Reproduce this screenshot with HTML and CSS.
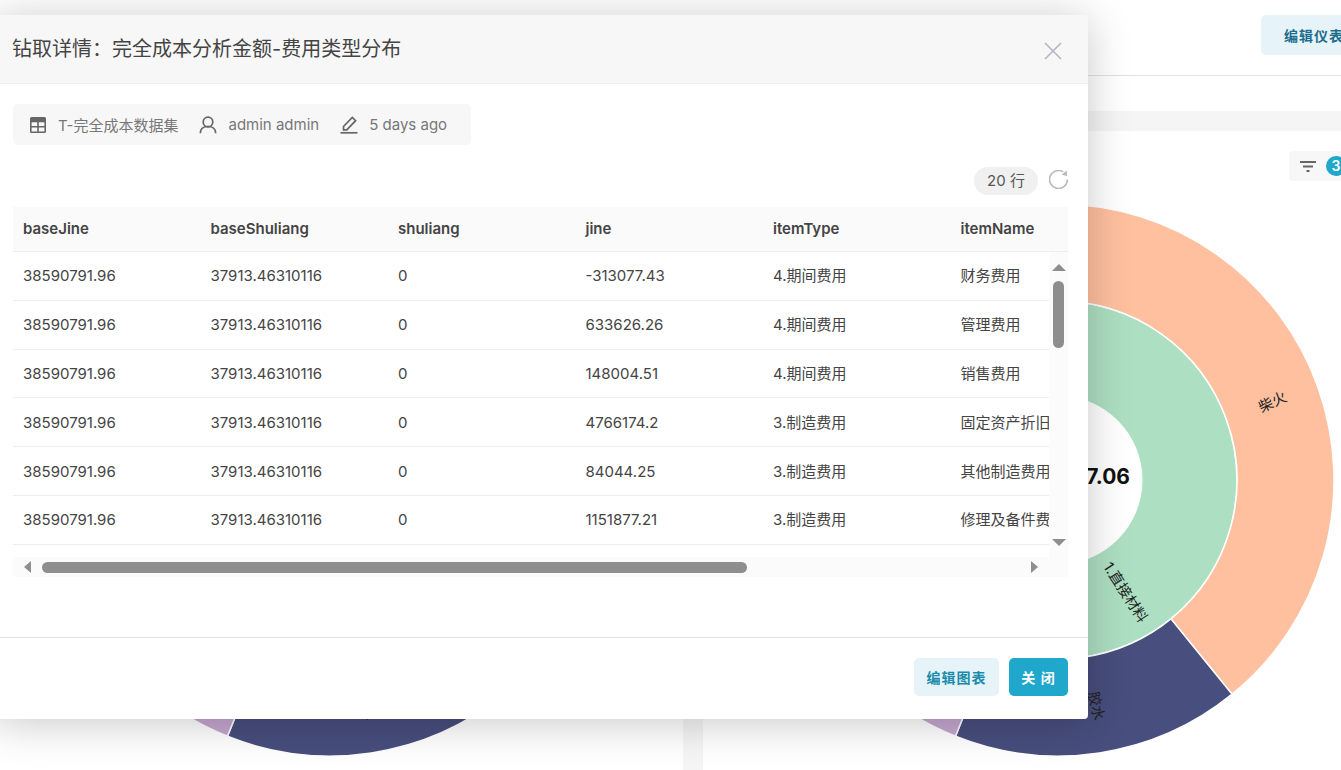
FILE: index.html
```html
<!DOCTYPE html>
<html lang="zh">
<head>
  <meta charset="UTF-8">
  <meta name="viewport" content="width=device-width, initial-scale=1">
  <title>钻取详情</title>
  <link rel="stylesheet" href="styles.css">
</head>
<body>
  <!-- Dashboard behind the modal -->
  <div class="page">
    <div class="topbar">
      <button class="btn btn-light btn-edit-dash">编辑仪表盘</button>
    </div>
    <div class="tabbar"></div>
    <div class="panels">
      <div class="panel">
        <div class="panel-head">
          <div class="filter-chip">
            <svg class="filter-icon" viewBox="0 0 16 12"><path d="M0 1h16M3 5.500h10M6.500 10h3" /></svg>
            <span class="filter-badge">3</span>
          </div>
        </div>
        <svg class="donut" viewBox="-280 -280 560 560">
          <circle class="ring-inner" r="179" />
          <circle class="ring-hole" r="84" />
          <path class="seg seg-peach" d="M0 -276A276 276 0 0 1 174.100 214.200L112.900 138.900A179 179 0 0 0 0 -179Z" />
          <path class="seg seg-navy" d="M174.100 214.200A276 276 0 0 1 -102.500 256.300L-66.500 166.200A179 179 0 0 0 112.900 138.900Z" />
          <path class="seg seg-purple" d="M-102.500 256.300A276 276 0 0 1 -239 138L-155 89.500A179 179 0 0 0 -66.500 166.200Z" />
          <text class="donut-label" transform="translate(37 226) rotate(78)">胶水</text>
        </svg>
      </div>
      <div class="panel">
        <div class="panel-head">
          <div class="filter-chip">
            <svg class="filter-icon" viewBox="0 0 16 12"><path d="M0 1h16M3 5.500h10M6.500 10h3" /></svg>
            <span class="filter-badge">3</span>
          </div>
        </div>
        <svg class="donut" viewBox="-280 -280 560 560">
          <circle class="ring-inner" r="179" />
          <circle class="ring-hole" r="84" />
          <path class="seg seg-peach" d="M0 -276A276 276 0 0 1 174.100 214.200L112.900 138.900A179 179 0 0 0 0 -179Z" />
          <path class="seg seg-navy" d="M174.100 214.200A276 276 0 0 1 -102.500 256.300L-66.500 166.200A179 179 0 0 0 112.900 138.900Z" />
          <path class="seg seg-purple" d="M-102.500 256.300A276 276 0 0 1 -239 138L-155 89.500A179 179 0 0 0 -66.500 166.200Z" />
          <text class="donut-label" transform="translate(215 -77) rotate(-25)">柴火</text>
          <text class="donut-label" transform="translate(66.500 113) rotate(57)">1.直接材料</text>
          <text class="donut-label" transform="translate(37 226) rotate(78)">胶水</text>
          <text class="donut-total" x="72" y="4">7.06</text>
        </svg>
      </div>
    </div>
  </div>

  <!-- Drill-down modal -->
  <div class="modal">
    <div class="modal-header">
      <h2 class="modal-title">钻取详情：完全成本分析金额-费用类型分布</h2>
      <svg class="modal-close" viewBox="0 0 18 18"><path d="M1 1l16 16M17 1L1 17" /></svg>
    </div>

    <div class="modal-body">
      <div class="info-bar">
        <svg class="info-icon" viewBox="0 0 18 18">
          <path class="icon-fill" fill-rule="evenodd" d="M2.500 1h13A1.500 1.500 0 0 1 17 2.500v13a1.500 1.500 0 0 1-1.500 1.500h-13A1.500 1.500 0 0 1 1 15.500v-13A1.500 1.500 0 0 1 2.500 1ZM2.600 6.200v3.800h5.600V6.200ZM9.800 6.200v3.800h5.600V6.200ZM2.600 11.500v3.900h5.600v-3.900ZM9.800 11.500v3.900h5.600v-3.900Z" />
        </svg>
        <span class="info-text info-text-cn">T-完全成本数据集</span>
        <svg class="info-icon" viewBox="0 0 18 18">
          <circle class="icon-line" cx="9" cy="6" r="4.800" />
          <path class="icon-line" d="M1.300 17.300c0-4.500 3.300-6.800 7.700-6.800s7.700 2.300 7.700 6.800" />
        </svg>
        <span class="info-text">admin admin</span>
        <svg class="info-icon" viewBox="0 0 18 18">
          <path class="icon-line" d="M3.500 13.800v-3.300L12.300 1.500l3.300 3.200-8.800 9.100Z" />
          <path class="icon-line" d="M0.500 16.800h17" />
        </svg>
        <span class="info-text">5 days ago</span>
      </div>

      <div class="table-tools">
        <span class="row-count">20 行</span>
        <svg class="refresh" viewBox="1 1 18 18">
          <path d="M18.500 10A8.500 8.500 0 1 1 14.500 2.800" />
          <polygon points="17.800,1.500 18.200,6.800 13,5.600" />
        </svg>
      </div>

      <div class="data-table">
        <table class="table-head">
          <tr>
            <th>baseJine</th><th>baseShuliang</th><th>shuliang</th><th>jine</th><th>itemType</th><th>itemName</th>
          </tr>
        </table>
        <div class="table-main">
          <div class="table-rows">
            <table class="table-body">
              <tr><td>38590791.96</td><td>37913.46310116</td><td>0</td><td>-313077.43</td><td>4.期间费用</td><td>财务费用</td></tr>
              <tr><td>38590791.96</td><td>37913.46310116</td><td>0</td><td>633626.26</td><td>4.期间费用</td><td>管理费用</td></tr>
              <tr><td>38590791.96</td><td>37913.46310116</td><td>0</td><td>148004.51</td><td>4.期间费用</td><td>销售费用</td></tr>
              <tr><td>38590791.96</td><td>37913.46310116</td><td>0</td><td>4766174.2</td><td>3.制造费用</td><td>固定资产折旧</td></tr>
              <tr><td>38590791.96</td><td>37913.46310116</td><td>0</td><td>84044.25</td><td>3.制造费用</td><td>其他制造费用</td></tr>
              <tr><td>38590791.96</td><td>37913.46310116</td><td>0</td><td>1151877.21</td><td>3.制造费用</td><td>修理及备件费</td></tr>
            </table>
          </div>
          <div class="vbar">
            <span class="arrow arrow-up"></span>
            <span class="vbar-thumb"></span>
            <span class="arrow arrow-down"></span>
          </div>
        </div>
        <div class="hbar">
          <span class="arrow arrow-left"></span>
          <span class="hbar-thumb"></span>
          <span class="arrow arrow-right"></span>
        </div>
      </div>
    </div>

    <div class="modal-footer">
      <button class="btn btn-light">编辑图表</button>
      <button class="btn btn-primary">关 闭</button>
    </div>
  </div>
</body>
</html>
```

FILE: styles.css
```css
* {
  box-sizing: border-box;
  margin: 0;
  padding: 0;
}

body {
  height: 770px;
  overflow: hidden;
  position: relative;
  background-color: #fff;
  color: #444;
  font-family: Inter, "Noto Sans CJK SC", sans-serif;
  font-size: 15px;
}

/* Dashboard behind */
.page {
  width: 1436px;
  margin-left: -23px;
  background-color: #f5f5f5;
  height: 770px;
}

.topbar {
  height: 76px;
  background-color: #fff;
  border-bottom: 1px solid #e2e2e2;
  display: flex;
  justify-content: flex-end;
  padding: 15px 31px 0 0;
}

.tabbar {
  height: 35px;
  background-color: #fff;
}

.panels {
  display: grid;
  grid-template-columns: 706px 710px;
  gap: 20px;
  margin-top: 20px;
}

.panel {
  background-color: #fff;
  height: 640px;
}

.panel-head {
  display: flex;
  justify-content: flex-end;
  padding: 20px 53px 0 0;
}

.filter-chip {
  width: 71px;
  height: 30px;
  background-color: #f7f7f7;
  border-radius: 4px;
  display: flex;
  align-items: center;
  padding-left: 11px;
  gap: 10px;
}

.filter-icon {
  width: 16px;
  height: 12px;
  margin-top: 2px;
  fill: none;
  stroke: #666;
  stroke-width: 2;
}

.filter-badge {
  width: 20px;
  height: 20px;
  border-radius: 50%;
  background-color: #20a7cc;
  color: #fff;
  font-size: 14px;
  font-weight: 600;
  text-align: center;
  line-height: 20px;
}

.donut {
  display: block;
  width: 560px;
  height: 560px;
  margin: 19px auto 0;
}

.ring-inner {
  fill: #addfc2;
  stroke: #fff;
  stroke-width: 1.500;
}

.ring-hole {
  fill: #fff;
  stroke: #fff;
}

.seg {
  stroke: #fff;
  stroke-width: 1.500;
}

.seg-peach { fill: #ffc09f; }
.seg-navy { fill: #484e7d; }
.seg-purple { fill: #c6a6d0; }

.donut-label {
  font-size: 14.500px;
  fill: #222;
  text-anchor: middle;
  dominant-baseline: middle;
}

.donut-total {
  font-size: 21px;
  font-weight: 700;
  fill: #111;
  text-anchor: end;
}

/* Buttons */
.btn {
  height: 38px;
  border: none;
  border-radius: 5px;
  font-family: inherit;
  font-size: 14px;
  font-weight: 600;
  letter-spacing: 1px;
  cursor: pointer;
}

.btn-light {
  width: 85px;
  background-color: #e6f4f9;
  color: #1a8cab;
}

.btn-edit-dash {
  width: 121px;
  height: 40px;
  color: #1d6d8c;
}

.btn-primary {
  width: 59px;
  background-color: #20a7cc;
  color: #fff;
}

/* Modal */
.modal {
  position: absolute;
  left: -7px;
  top: 15px;
  width: 1095px;
  height: 704px;
  background-color: #fff;
  border-radius: 4px;
  box-shadow: 0 4px 44px rgba(0, 0, 0, 0.22);
  display: flex;
  flex-direction: column;
}

.modal-header {
  height: 69px;
  background-color: #f7f7f7;
  border-bottom: 1px solid #eee;
  border-radius: 4px 4px 0 0;
  display: flex;
  align-items: center;
  justify-content: space-between;
  padding: 0 26px 0 19px;
}

.modal-title {
  font-size: 20px;
  font-weight: 400;
  color: #444;
  margin-bottom: 3px;
}

.modal-close {
  width: 18px;
  height: 18px;
  margin-top: 4px;
  fill: none;
  stroke: #b0b3c1;
  stroke-width: 1.500;
}

.modal-body {
  flex: 1;
  padding: 20px 20px 0;
}

.info-bar {
  width: 458px;
  height: 41px;
  background-color: #f7f7f7;
  border-radius: 5px;
  display: flex;
  align-items: center;
  padding-left: 16px;
  color: #777;
}

.info-icon {
  width: 18px;
  height: 18px;
  flex: none;
  margin-right: 11px;
}

.icon-fill { fill: #666; }

.icon-line {
  fill: none;
  stroke: #666;
  stroke-width: 1.700;
}

.info-text {
  margin-right: 21px;
  white-space: nowrap;
}

.info-text-cn {
  padding-bottom: 1px;
}

.table-tools {
  display: flex;
  justify-content: flex-end;
  align-items: center;
  gap: 11px;
  margin-top: 22px;
  height: 28px;
}

.row-count {
  width: 64px;
  height: 28px;
  line-height: 28px;
  border-radius: 14px;
  background-color: #f0f0f0;
  text-align: center;
  color: #555;
}

.refresh {
  width: 19px;
  height: 19px;
  margin-bottom: 4px;
  fill: none;
  stroke: #bbb;
  stroke-width: 1.600;
}

.refresh polygon {
  fill: #bbb;
  stroke: none;
}

.data-table {
  margin-top: 12px;
  overflow: hidden;
}

table {
  width: 1125px;
  table-layout: fixed;
  border-collapse: separate;
  border-spacing: 0;
}

th {
  height: 45px;
  padding: 0 10px 2px;
  background-color: #fafafa;
  border-bottom: 1px solid #eee;
  font-weight: 600;
  text-align: left;
  color: #444;
}

.table-main {
  display: flex;
  height: 305px;
}

.table-rows {
  width: 1036px;
  overflow: hidden;
}

td {
  height: 48.800px;
  padding: 0 10px;
  border-bottom: 1px solid #eee;
  white-space: nowrap;
  overflow: hidden;
}

/* 中文列 sits a pixel higher than the numbers */
td:nth-child(n+5) {
  padding-bottom: 2px;
}

/* Scrollbars drawn by hand so they keep the arrows */
.vbar {
  width: 19px;
  background-color: #fbfbfb;
  display: flex;
  flex-direction: column;
  align-items: center;
  padding: 12px 0 11px;
}

.vbar-thumb {
  width: 11px;
  height: 67px;
  margin-top: 10px;
  background-color: #8e8e8e;
  border-radius: 6px;
}

.hbar {
  height: 20px;
  background-color: #fbfbfb;
  display: flex;
  align-items: center;
  padding: 0 30px 0 11px;
}

.hbar-thumb {
  width: 705px;
  height: 11px;
  margin-left: 11px;
  background-color: #8e8e8e;
  border-radius: 6px;
}

.arrow {
  width: 0;
  height: 0;
  border-style: solid;
  border-color: transparent;
}

.arrow-up {
  border-width: 0 7px 7px;
  border-bottom-color: #8e8e8e;
}

.arrow-down {
  margin-top: auto;
  border-width: 7px 7px 0;
  border-top-color: #8e8e8e;
}

.arrow-left {
  border-width: 6.500px 7px 6.500px 0;
  border-right-color: #8e8e8e;
}

.arrow-right {
  margin-left: auto;
  border-width: 6.500px 0 6.500px 7px;
  border-left-color: #8e8e8e;
}

.modal-footer {
  height: 82px;
  border-top: 1px solid #e2e2e2;
  display: flex;
  justify-content: flex-end;
  align-items: flex-start;
  gap: 10px;
  padding: 20px 20px 0;
}
```
